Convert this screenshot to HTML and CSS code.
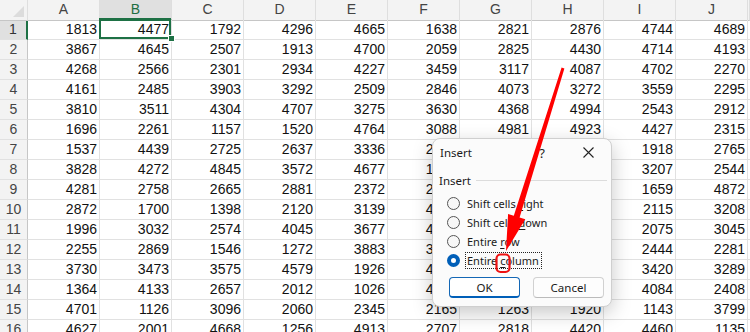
FILE: index.html
```html
<!DOCTYPE html>
<html>
<head>
<meta charset="utf-8">
<link rel="stylesheet" href="styles.css">
</head>
<body>
<div class="sheet">
  <div class="row head"><div class="corner"></div><div class="ch">A</div><div class="ch selh">B</div><div class="ch">C</div><div class="ch">D</div><div class="ch">E</div><div class="ch">F</div><div class="ch">G</div><div class="ch">H</div><div class="ch">I</div><div class="ch">J</div><div class="ch"></div></div>
  <div class="row"><div class="rh selr">1</div><div class="c">1813</div><div class="c sel">4477</div><div class="c">1792</div><div class="c">4296</div><div class="c">4665</div><div class="c">1638</div><div class="c">2821</div><div class="c">2876</div><div class="c">4744</div><div class="c">4689</div><div class="c"></div></div>
  <div class="row"><div class="rh">2</div><div class="c">3867</div><div class="c">4645</div><div class="c">2507</div><div class="c">1913</div><div class="c">4700</div><div class="c">2059</div><div class="c">2825</div><div class="c">4430</div><div class="c">4714</div><div class="c">4193</div><div class="c"></div></div>
  <div class="row"><div class="rh">3</div><div class="c">4268</div><div class="c">2566</div><div class="c">2301</div><div class="c">2934</div><div class="c">4227</div><div class="c">3459</div><div class="c">3117</div><div class="c">4087</div><div class="c">4702</div><div class="c">2270</div><div class="c"></div></div>
  <div class="row"><div class="rh">4</div><div class="c">4161</div><div class="c">2485</div><div class="c">3903</div><div class="c">3292</div><div class="c">2509</div><div class="c">2846</div><div class="c">4073</div><div class="c">3272</div><div class="c">3559</div><div class="c">2295</div><div class="c"></div></div>
  <div class="row"><div class="rh">5</div><div class="c">3810</div><div class="c">3511</div><div class="c">4304</div><div class="c">4707</div><div class="c">3275</div><div class="c">3630</div><div class="c">4368</div><div class="c">4994</div><div class="c">2543</div><div class="c">2912</div><div class="c"></div></div>
  <div class="row"><div class="rh">6</div><div class="c">1696</div><div class="c">2261</div><div class="c">1157</div><div class="c">1520</div><div class="c">4764</div><div class="c">3088</div><div class="c">4981</div><div class="c">4923</div><div class="c">4427</div><div class="c">2315</div><div class="c"></div></div>
  <div class="row"><div class="rh">7</div><div class="c">1537</div><div class="c">4439</div><div class="c">2725</div><div class="c">2637</div><div class="c">3336</div><div class="c">2381</div><div class="c">4512</div><div class="c">3904</div><div class="c">1918</div><div class="c">2765</div><div class="c"></div></div>
  <div class="row"><div class="rh">8</div><div class="c">3828</div><div class="c">4272</div><div class="c">4845</div><div class="c">3572</div><div class="c">4677</div><div class="c">1462</div><div class="c">2230</div><div class="c">1785</div><div class="c">3207</div><div class="c">2544</div><div class="c"></div></div>
  <div class="row"><div class="rh">9</div><div class="c">4281</div><div class="c">2758</div><div class="c">2665</div><div class="c">2881</div><div class="c">2372</div><div class="c">2917</div><div class="c">3641</div><div class="c">4218</div><div class="c">1659</div><div class="c">4872</div><div class="c"></div></div>
  <div class="row"><div class="rh">10</div><div class="c">2872</div><div class="c">1700</div><div class="c">1398</div><div class="c">2120</div><div class="c">3139</div><div class="c">4056</div><div class="c">1587</div><div class="c">2949</div><div class="c">2115</div><div class="c">3208</div><div class="c"></div></div>
  <div class="row"><div class="rh">11</div><div class="c">1996</div><div class="c">3032</div><div class="c">2574</div><div class="c">4045</div><div class="c">3677</div><div class="c">4433</div><div class="c">2708</div><div class="c">3315</div><div class="c">2075</div><div class="c">3045</div><div class="c"></div></div>
  <div class="row"><div class="rh">12</div><div class="c">2255</div><div class="c">2869</div><div class="c">1546</div><div class="c">1272</div><div class="c">3883</div><div class="c">3190</div><div class="c">4726</div><div class="c">1604</div><div class="c">2444</div><div class="c">2281</div><div class="c"></div></div>
  <div class="row"><div class="rh">13</div><div class="c">3730</div><div class="c">3473</div><div class="c">3575</div><div class="c">4579</div><div class="c">1926</div><div class="c">4612</div><div class="c">3058</div><div class="c">2377</div><div class="c">3420</div><div class="c">3289</div><div class="c"></div></div>
  <div class="row"><div class="rh">14</div><div class="c">1364</div><div class="c">4133</div><div class="c">2657</div><div class="c">2012</div><div class="c">1026</div><div class="c">4295</div><div class="c">1849</div><div class="c">4561</div><div class="c">4084</div><div class="c">2408</div><div class="c"></div></div>
  <div class="row"><div class="rh">15</div><div class="c">4701</div><div class="c">1126</div><div class="c">3096</div><div class="c">2060</div><div class="c">2345</div><div class="c">2165</div><div class="c">1263</div><div class="c">1920</div><div class="c">1143</div><div class="c">3799</div><div class="c"></div></div>
  <div class="row"><div class="rh">16</div><div class="c">4627</div><div class="c">2001</div><div class="c">4668</div><div class="c">1256</div><div class="c">4913</div><div class="c">2707</div><div class="c">2818</div><div class="c">4420</div><div class="c">4460</div><div class="c">1135</div><div class="c"></div></div>
</div>

<div class="dlg">
  <div class="dtitle">
    <span class="dt">Insert</span>
    <span class="help">?</span>
    <span class="close"><svg width="11" height="11" viewBox="0 0 11 11"><path d="M0.5 0.5 L10.5 10.5 M10.5 0.5 L0.5 10.5" stroke="#222" stroke-width="1.1" fill="none"/></svg></span>
  </div>
  <div class="group"><span>Insert</span><div class="gline"></div></div>
  <div class="opts">
    <div class="opt"><span class="radio"></span><span class="lbl">Shift cells <u>r</u>ight</span></div>
    <div class="opt"><span class="radio"></span><span class="lbl">Shift cells <u>d</u>own</span></div>
    <div class="opt"><span class="radio"></span><span class="lbl">Entire <u>r</u>ow</span></div>
    <div class="opt"><span class="radio on"></span><span class="lbl focus">Entire <u>c</u>olumn</span></div>
  </div>
  <div class="btns"><div class="btn ok">OK</div><div class="btn">Cancel</div></div>
</div>

<svg class="anno" width="750" height="332" viewBox="0 0 750 332">
  <polygon points="564.4,68.4 519.6,217.5 525.3,219.3 506,251 508.1,213.9 513.8,215.7 561.6,67.6" fill="#ff0000"/>
  <rect x="496.5" y="254.5" width="13" height="17.5" rx="4" ry="4" fill="none" stroke="#ee1111" stroke-width="2.2"/>
</svg>
</body>
</html>
```

FILE: styles.css
```css
html, body {
  margin: 0;
  padding: 0;
}
body {
  width: 750px;
  height: 332px;
  overflow: hidden;
  position: relative;
  background: #ffffff;
  font-family: "Liberation Sans", Arial, sans-serif;
}

.sheet {
  display: flex;
  flex-direction: column;
}

.row {
  display: grid;
  grid-template-columns: 28px repeat(10, 72px) 2px;
  height: 20px;
}

.c {
  box-sizing: border-box;
  border-right: 1px solid #e1e1e1;
  border-bottom: 1px solid #e1e1e1;
  font-size: 14px;
  line-height: 19px;
  text-align: right;
  padding-right: 2px;
  color: #111;
  white-space: nowrap;
  overflow: hidden;
}

.c.sel {
  position: relative;
  overflow: visible;
}
.c.sel::before {
  content: "";
  position: absolute;
  left: -1px;
  top: -2px;
  right: 0;
  bottom: 0;
  border: 2px solid #1e7145;
}
.c.sel::after {
  content: "";
  position: absolute;
  right: -4px;
  bottom: -3px;
  width: 5px;
  height: 5px;
  background: #1e7145;
  border: 1px solid #ffffff;
  z-index: 2;
}

.head > div {
  box-sizing: border-box;
  background: #f3f3f3;
  border-right: 1px solid #dedede;
  border-bottom: 1px solid #c6c6c6;
}
.ch {
  font-size: 14px;
  line-height: 19px;
  text-align: center;
  color: #444;
}
.ch.selh {
  background: #e0e0e0 !important;
  color: #1e6e42;
  border-bottom: 2px solid #1e7145 !important;
}
.corner {
  position: relative;
}
.corner::after {
  content: "";
  position: absolute;
  right: 3px;
  bottom: 3px;
  width: 0;
  height: 0;
  border-left: 11px solid transparent;
  border-bottom: 11px solid #dcdcdc;
}

.rh {
  box-sizing: border-box;
  background: #f3f3f3;
  border-right: 1px solid #c6c6c6;
  border-bottom: 1px solid #e1e1e1;
  font-size: 14px;
  line-height: 19px;
  text-align: center;
  color: #444;
}
.rh.selr {
  background: #e0e0e0;
  color: #333;
  border-right: 2px solid #1e7145;
}

/* Dialog */
.dlg {
  position: absolute;
  left: 432px;
  top: 138px;
  width: 180px;
  height: 169px;
  box-sizing: border-box;
  background: #fbfbfb;
  border: 1px solid #cfcfcf;
  border-radius: 8px;
  box-shadow: 0 6px 20px rgba(0, 0, 0, 0.22);
  font-family: "Noto Sans", "Open Sans", sans-serif;
  font-size: 11px;
  color: #1a1a1a;
  display: flex;
  flex-direction: column;
}
.dtitle {
  height: 27px;
  display: flex;
  align-items: center;
  padding-left: 7px;
}
.dt {
  flex: 1;
  font-size: 11.5px;
}
.help {
  width: 14px;
  text-align: center;
  font-size: 13px;
  margin-right: 34px;
}
.close {
  width: 11px;
  height: 11px;
  display: flex;
  margin-right: 17px;
}
.group {
  display: flex;
  align-items: center;
  height: 16px;
  margin-top: 6px;
  padding-left: 6px;
  font-size: 11.5px;
}
.gline {
  flex: 1;
  height: 1px;
  background: #dcdcdc;
  margin-left: 5px;
  margin-right: 4px;
}
.opts {
  margin-top: 6px;
  display: flex;
  flex-direction: column;
}
.opt {
  height: 19px;
  display: flex;
  align-items: center;
  padding-left: 14px;
}
.radio {
  width: 13px;
  height: 13px;
  box-sizing: border-box;
  border: 1px solid #555;
  border-radius: 50%;
  background: #f7f7f7;
  margin-right: 5px;
  flex: none;
}
.radio.on {
  border: 4px solid #005fb8;
  background: #ffffff;
}
.lbl {
  line-height: 15px;
  padding: 0 1px;
  border: 1px solid transparent;
}
.lbl.focus {
  border: 1px dotted #222;
  padding: 0 2px 0 1px;
}
.lbl u {
  text-underline-offset: 2px;
}
.btns {
  margin-top: 7px;
  display: flex;
  gap: 13px;
  padding-left: 16px;
}
.btn {
  width: 71px;
  height: 21px;
  box-sizing: border-box;
  border: 1px solid #d1d1d1;
  border-bottom-color: #bbbbbb;
  border-radius: 4px;
  background: #fdfdfd;
  display: flex;
  align-items: center;
  justify-content: center;
  font-size: 11.5px;
}
.btn.ok {
  border: 1px solid #1467b5;
  border-bottom: 2px solid #005fb8;
  background: #ffffff;
}

.anno {
  position: absolute;
  left: 0;
  top: 0;
  pointer-events: none;
}
```
